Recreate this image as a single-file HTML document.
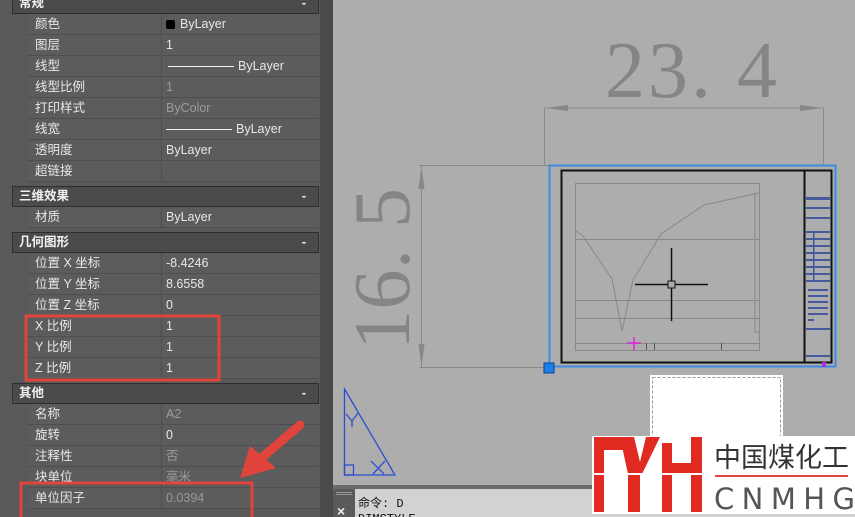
<!DOCTYPE html>
<html><head><meta charset="utf-8"><style>
*{margin:0;padding:0;box-sizing:border-box}
body{width:855px;height:517px;overflow:hidden;background:#adadad;position:relative;font-family:"Liberation Sans","Noto Sans CJK SC",sans-serif;font-size:12px}
#panel{position:absolute;left:0;top:0;width:320px;height:517px;background:#595959}
#strip{position:absolute;left:320px;top:0;width:13px;height:517px;background:#4a4a4a}
.hd{position:absolute;left:12px;width:307px;height:21px;background:#4b4b4b;border:1px solid #2e2e2e;color:#f2f2f2;font-weight:bold;padding-left:6px;line-height:19px;font-size:12.5px}
.hd b{position:absolute;right:12px;top:0;font-weight:bold}
.row{position:absolute;left:28px;width:291px;height:21px;border-bottom:1px solid #4e4e4e;background:#5c5c5c;color:#e8e8e8;line-height:21px;font-size:12.5px}
.row .k{position:absolute;left:7px}
.row .v{position:absolute;left:133px;top:0;height:21px;border-left:1px solid #4e4e4e;padding-left:4px;width:158px}
.g{color:#9a9a9a}
.ln{display:inline-block;width:66px;height:1px;background:#eee;vertical-align:middle;margin-right:4px}
</style></head><body>
<div id="panel">
<div class="hd" style="top:-7px">常规<b>-</b></div>
<div class="row" style="top:14px"><span class="k">颜色</span><span class="v"><span style="display:inline-block;width:9px;height:9px;background:#000;border-radius:2px;margin-right:5px;vertical-align:-1px"></span>ByLayer</span></div>
<div class="row" style="top:35px"><span class="k">图层</span><span class="v">1</span></div>
<div class="row" style="top:56px"><span class="k">线型</span><span class="v"><span class="ln" style="margin-left:2px"></span>ByLayer</span></div>
<div class="row" style="top:77px"><span class="k">线型比例</span><span class="v g">1</span></div>
<div class="row" style="top:98px"><span class="k">打印样式</span><span class="v g">ByColor</span></div>
<div class="row" style="top:119px"><span class="k">线宽</span><span class="v"><span class="ln"></span>ByLayer</span></div>
<div class="row" style="top:140px"><span class="k">透明度</span><span class="v">ByLayer</span></div>
<div class="row" style="top:161px"><span class="k">超链接</span><span class="v"></span></div>
<div class="hd" style="top:186px">三维效果<b>-</b></div>
<div class="row" style="top:207px"><span class="k">材质</span><span class="v">ByLayer</span></div>
<div class="hd" style="top:232px">几何图形<b>-</b></div>
<div class="row" style="top:253px"><span class="k">位置 X 坐标</span><span class="v">-8.4246</span></div>
<div class="row" style="top:274px"><span class="k">位置 Y 坐标</span><span class="v">8.6558</span></div>
<div class="row" style="top:295px"><span class="k">位置 Z 坐标</span><span class="v">0</span></div>
<div class="row" style="top:316px"><span class="k">X 比例</span><span class="v">1</span></div>
<div class="row" style="top:337px"><span class="k">Y 比例</span><span class="v">1</span></div>
<div class="row" style="top:358px"><span class="k">Z 比例</span><span class="v">1</span></div>
<div class="hd" style="top:383px">其他<b>-</b></div>
<div class="row" style="top:404px"><span class="k">名称</span><span class="v g">A2</span></div>
<div class="row" style="top:425px"><span class="k">旋转</span><span class="v">0</span></div>
<div class="row" style="top:446px"><span class="k">注释性</span><span class="v g">否</span></div>
<div class="row" style="top:467px"><span class="k">块单位</span><span class="v g">毫米</span></div>
<div class="row" style="top:488px"><span class="k">单位因子</span><span class="v g">0.0394</span></div>
</div>
<div id="strip"></div>

<svg style="position:absolute;left:0;top:0" width="855" height="517">
<rect x="26" y="316" width="193" height="64" fill="none" stroke="#e0443c" stroke-width="3"/>
<rect x="21" y="483" width="231" height="36" fill="none" stroke="#e0443c" stroke-width="3"/>
<line x1="300" y1="425" x2="258" y2="461" stroke="#e0443c" stroke-width="9" stroke-linecap="round"/>
<polygon points="240,478 250,446 276,468" fill="#e0443c"/>

<!-- dimensions -->
<text x="605" y="97" font-family="Liberation Serif,serif" font-size="80" fill="#858585" textLength="172">23. 4</text>
<line x1="545" y1="108" x2="823" y2="108" stroke="#888"/>
<polygon points="545,108 568,105 568,111" fill="#888"/>
<polygon points="823,108 800,105 800,111" fill="#888"/>
<line x1="544.5" y1="108" x2="544.5" y2="166" stroke="#888"/>
<line x1="823.5" y1="108" x2="823.5" y2="166" stroke="#888"/>
<text transform="translate(409,350) rotate(-90)" font-family="Liberation Serif,serif" font-size="80" fill="#858585" textLength="162">16. 5</text>
<line x1="421.5" y1="166" x2="421.5" y2="367" stroke="#888"/>
<polygon points="421.5,166 418.5,189 424.5,189" fill="#888"/>
<polygon points="421.5,367 418.5,344 424.5,344" fill="#888"/>
<line x1="419" y1="165.5" x2="549" y2="165.5" stroke="#888"/>
<line x1="419" y1="367.5" x2="549" y2="367.5" stroke="#888"/>

<!-- drawing -->
<rect x="549.5" y="165.5" width="286" height="201" fill="none" stroke="#3d8ae0" stroke-width="2"/>
<rect x="561.5" y="170.5" width="270" height="192" fill="none" stroke="#111" stroke-width="2"/>
<line x1="804.5" y1="170" x2="804.5" y2="362" stroke="#111" stroke-width="2"/>
<rect x="575.5" y="183.5" width="184" height="167" fill="none" stroke="#888"/>
<line x1="575" y1="239.5" x2="759" y2="239.5" stroke="#888"/>
<line x1="575" y1="300.5" x2="759" y2="300.5" stroke="#888"/>
<line x1="575" y1="318.5" x2="759" y2="318.5" stroke="#888"/>
<line x1="575" y1="343.5" x2="759" y2="343.5" stroke="#888"/>
<line x1="755" y1="193" x2="755" y2="332" stroke="#888"/>
<line x1="755" y1="332" x2="759" y2="332" stroke="#888"/>
<polyline points="576,231 583,236 612,279 622,331 633,280 661,234 704,205 759,193" fill="none" stroke="#888"/>
<line x1="635" y1="284.5" x2="708" y2="284.5" stroke="#111" stroke-width="1.5"/>
<line x1="671.5" y1="248" x2="671.5" y2="321" stroke="#111" stroke-width="1.5"/>
<rect x="668" y="281" width="7" height="7" fill="#aaa" stroke="#111"/>
<line x1="627" y1="343" x2="641" y2="343" stroke="#e020e0" stroke-width="1.5"/>
<line x1="634" y1="337" x2="634" y2="350" stroke="#e020e0" stroke-width="1.5"/>
<line x1="646.5" y1="343" x2="646.5" y2="350" stroke="#555"/>
<line x1="654.5" y1="343" x2="654.5" y2="350" stroke="#555"/>
<line x1="721.5" y1="343" x2="721.5" y2="350" stroke="#555"/>
<g fill="#445a9a">
<rect x="806" y="197" width="24" height="3"/><rect x="806" y="207" width="24" height="2"/>
<rect x="806" y="217" width="24" height="2"/><rect x="806" y="231" width="24" height="2"/>
<rect x="806" y="238" width="24" height="2"/><rect x="806" y="245" width="24" height="2"/>
<rect x="806" y="252" width="24" height="2"/><rect x="806" y="259" width="24" height="2"/>
<rect x="806" y="266" width="24" height="2"/><rect x="806" y="273" width="24" height="2"/>
<rect x="806" y="280" width="24" height="2"/><rect x="808" y="289" width="20" height="2"/>
<rect x="808" y="295" width="20" height="2"/><rect x="808" y="301" width="20" height="2"/>
<rect x="808" y="307" width="20" height="2"/><rect x="808" y="313" width="20" height="2"/>
<rect x="808" y="319" width="6" height="2"/><rect x="806" y="328" width="24" height="2"/>
<rect x="806" y="355" width="24" height="2"/>
<rect x="813" y="232" width="1.5" height="48"/>
</g>
<rect x="822" y="362" width="4" height="5" fill="#a030e0"/>
<rect x="544" y="363" width="10" height="10" fill="#1a7fe8" stroke="#0a3f90"/>

<!-- triangle -->
<g fill="none" stroke="#2c4fd0" stroke-width="1.3">
<polygon points="344.5,389 395,475 344.5,475"/>
<rect x="344.5" y="465" width="9" height="10"/>
<polyline points="346,414 352,421 358,413"/><line x1="352" y1="421" x2="352" y2="427"/>
<line x1="371" y1="461" x2="384" y2="474"/><line x1="373" y1="474" x2="385" y2="461"/>
</g>

<!-- white box -->
<rect x="650" y="375" width="133" height="70" fill="#fff"/>
<rect x="652.5" y="377.5" width="128" height="65" fill="none" stroke="#999" stroke-dasharray="3,2"/>

<!-- command area -->
<rect x="333" y="485" width="522" height="4" fill="#6a6a6a"/>
<rect x="333" y="489" width="522" height="28" fill="#d2d2d2"/>
<rect x="333" y="489" width="22" height="28" fill="#5a5a5a"/>
<g fill="#999"><rect x="336" y="492" width="16" height="1"/><rect x="336" y="494" width="16" height="1"/></g>
<text x="337" y="516" fill="#eee" font-size="14" font-weight="bold" font-family="Liberation Sans,sans-serif">×</text>
<text x="358" y="507" fill="#111" font-size="12" font-family="Liberation Mono,Noto Sans CJK SC,monospace">命令: D</text>
<text x="358" y="522" fill="#111" font-size="12" font-family="Liberation Mono,monospace">DIMSTYLE</text>

<!-- logo -->
<rect x="592" y="436" width="263" height="78" fill="#fff"/>
<g fill="#e02a22">
<rect x="594" y="437" width="10" height="75"/>
<rect x="594" y="437" width="34" height="13"/>
<polygon points="620,437 634,437 640,462 646,437 660,437 642,474 628,474"/>
<rect x="628" y="470" width="12" height="42"/>
<rect x="662" y="443" width="10" height="69"/>
<rect x="662" y="463" width="40" height="10"/>
<rect x="691" y="437" width="11" height="75"/>
</g>
<rect x="592" y="473" width="112" height="2" fill="#fff"/>
<text x="714" y="467" font-family="Liberation Sans,Noto Sans CJK SC,sans-serif" font-size="27" fill="#333" textLength="135">中国煤化工</text>
<rect x="715" y="475" width="133" height="2" fill="#e0483f"/>
<text x="714" y="509" font-family="DejaVu Sans,sans-serif" font-size="29" fill="#555" textLength="141">CNMHG</text>
</svg>
</body></html>
